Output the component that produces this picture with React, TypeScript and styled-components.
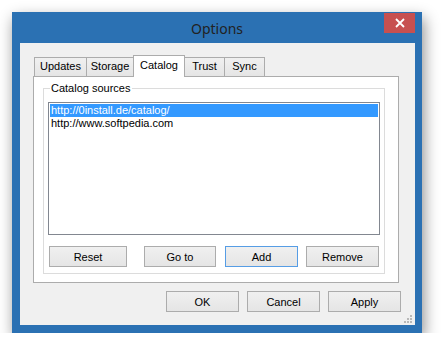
import React from "react";
import styled, { createGlobalStyle, css } from "styled-components";

const GlobalStyle = createGlobalStyle`
  html, body {
    margin: 0;
    padding: 0;
    background: #ffffff;
  }
  body {
    font-family: "Liberation Sans", Arial, sans-serif;
    font-size: 11px;
    color: #000;
  }
`;

const tabs = [
  { name: "Updates", width: 53 },
  { name: "Storage", width: 48 },
  { name: "Catalog", width: 52, active: true },
  { name: "Trust", width: 41 },
  { name: "Sync", width: 41 },
];

const sources = ["http://0install.de/catalog/", "http://www.softpedia.com"];

const SizeGrip = () => (
  <Styled.Grip width="9" height="9" viewBox="0 0 9 9">
    {[
      [7, 1],
      [4, 4],
      [7, 4],
      [1, 7],
      [4, 7],
      [7, 7],
    ].map(([x, y]) => (
      <rect key={`${x}-${y}`} x={x} y={y} width="2" height="2" fill="#b8b8b8" />
    ))}
  </Styled.Grip>
);

export default function App() {
  return (
    <>
      <GlobalStyle />
      <Styled.Window>
        <Styled.TitleBar>
          <span />
          <Styled.Title>Options</Styled.Title>
          <Styled.Close aria-label="Close">
            <svg width="10" height="10" viewBox="0 0 10 10">
              <path d="M1 1 L9 9 M9 1 L1 9" stroke="#fff" strokeWidth="1.8" />
            </svg>
          </Styled.Close>
        </Styled.TitleBar>
        <Styled.Client>
          <Styled.TabControl>
            <Styled.TabStrip>
              {tabs.map((t) => (
                <Styled.Tab key={t.name} $width={t.width} $active={!!t.active}>
                  {t.name}
                </Styled.Tab>
              ))}
            </Styled.TabStrip>
            <Styled.TabPage>
              <Styled.GroupBox>
                <Styled.Legend>Catalog sources</Styled.Legend>
                <Styled.ListBox>
                  {sources.map((s, i) => (
                    <Styled.ListItem key={s} $selected={i === 0}>
                      {s}
                    </Styled.ListItem>
                  ))}
                </Styled.ListBox>
                <Styled.ButtonRow>
                  <Styled.Button $width={78}>Reset</Styled.Button>
                  <Styled.Button $width={72} $gap={17}>
                    Go to
                  </Styled.Button>
                  <Styled.Button $width={73} $gap={9} $focused>
                    Add
                  </Styled.Button>
                  <Styled.Button $width={73} $gap={8}>
                    Remove
                  </Styled.Button>
                </Styled.ButtonRow>
              </Styled.GroupBox>
            </Styled.TabPage>
          </Styled.TabControl>
          <Styled.DialogButtons>
            <Styled.Button $width={73} $height={21}>
              OK
            </Styled.Button>
            <Styled.Button $width={73} $height={21} $gap={8}>
              Cancel
            </Styled.Button>
            <Styled.Button $width={73} $height={21} $gap={8}>
              Apply
            </Styled.Button>
          </Styled.DialogButtons>
          <SizeGrip />
        </Styled.Client>
      </Styled.Window>
    </>
  );
}

const Styled = {
  Window: styled.div`
    margin: 12px 0 0 12px;
    width: 410px;
    height: 321px;
    background: #2b71b3;
    box-shadow: 2px 6px 14px rgba(0, 0, 0, 0.45);
    display: flex;
    flex-direction: column;
    box-sizing: border-box;
    padding: 0 7px 8px 8px;
  `,
  TitleBar: styled.div`
    height: 31px;
    display: grid;
    grid-template-columns: 1fr auto 1fr;
    align-items: start;
    margin: 0 -7px 0 -8px;
  `,
  Title: styled.div`
    font-family: "Noto Sans", "Open Sans", sans-serif;
    font-size: 14px;
    color: #222;
    line-height: 20px;
    margin-top: 7px;
  `,
  Close: styled.button`
    justify-self: end;
    margin: 1px 7px 0 0;
    width: 31px;
    height: 20px;
    border: none;
    padding: 0;
    background: #c75050;
    display: flex;
    align-items: center;
    justify-content: center;
  `,
  Client: styled.div`
    position: relative;
    flex: 1;
    background: #f0f0f0;
    display: flex;
    flex-direction: column;
    padding: 12px 16px 0 13px;
  `,
  TabControl: styled.div`
    width: 366px;
    height: 227px;
    display: flex;
    flex-direction: column;
  `,
  TabStrip: styled.div`
    display: flex;
    align-items: flex-end;
    height: 21px;
    padding-left: 2px;
    position: relative;
    z-index: 1;
  `,
  Tab: styled.div<{ $width: number; $active: boolean }>`
    box-sizing: border-box;
    width: ${(p) => p.$width}px;
    height: 19px;
    border: 1px solid #acacac;
    border-bottom: none;
    margin-left: -1px;
    background: linear-gradient(#f0f0f0, #e5e5e5);
    font-size: 11px;
    line-height: 17px;
    text-align: center;
    color: #000;
    ${(p) =>
      p.$active &&
      css`
        height: 22px;
        margin-bottom: -1px;
        background: #ffffff;
        line-height: 19px;
        position: relative;
        z-index: 2;
      `}
  `,
  TabPage: styled.div`
    flex: 1;
    background: #ffffff;
    border: 1px solid #acacac;
    padding: 11px 13px 8px 9px;
    display: flex;
  `,
  GroupBox: styled.div`
    position: relative;
    flex: 1;
    border: 1px solid #dcdcdc;
    padding: 13px 4px 6px 4px;
    display: flex;
    flex-direction: column;
  `,
  Legend: styled.span`
    position: absolute;
    top: -7px;
    left: 6px;
    padding: 0 1px;
    background: #ffffff;
    line-height: 13px;
  `,
  ListBox: styled.div`
    height: 133px;
    box-sizing: border-box;
    border: 1px solid #828790;
    background: #ffffff;
    padding: 1px;
  `,
  ListItem: styled.div<{ $selected: boolean }>`
    height: 13px;
    line-height: 13px;
    padding-left: 1px;
    color: ${(p) => (p.$selected ? "#ffffff" : "#000")};
    background: ${(p) => (p.$selected ? "#3399ff" : "transparent")};
  `,
  ButtonRow: styled.div`
    display: flex;
    margin-top: 11px;
    padding-left: 1px;
  `,
  Button: styled.button<{
    $width: number;
    $height?: number;
    $gap?: number;
    $focused?: boolean;
  }>`
    box-sizing: border-box;
    width: ${(p) => p.$width}px;
    height: ${(p) => p.$height ?? 21}px;
    margin-left: ${(p) => p.$gap ?? 0}px;
    border: 1px solid ${(p) => (p.$focused ? "#569de5" : "#acacac")};
    background: linear-gradient(#f0f0f0, #e5e5e5);
    font-family: "Liberation Sans", Arial, sans-serif;
    font-size: 11px;
    color: #000;
    padding: 0;
  `,
  DialogButtons: styled.div`
    display: flex;
    justify-content: flex-end;
    margin-top: 9px;
    margin-right: -2px;
  `,
  Grip: styled.svg`
    position: absolute;
    right: 3px;
    bottom: 2px;
  `,
};
